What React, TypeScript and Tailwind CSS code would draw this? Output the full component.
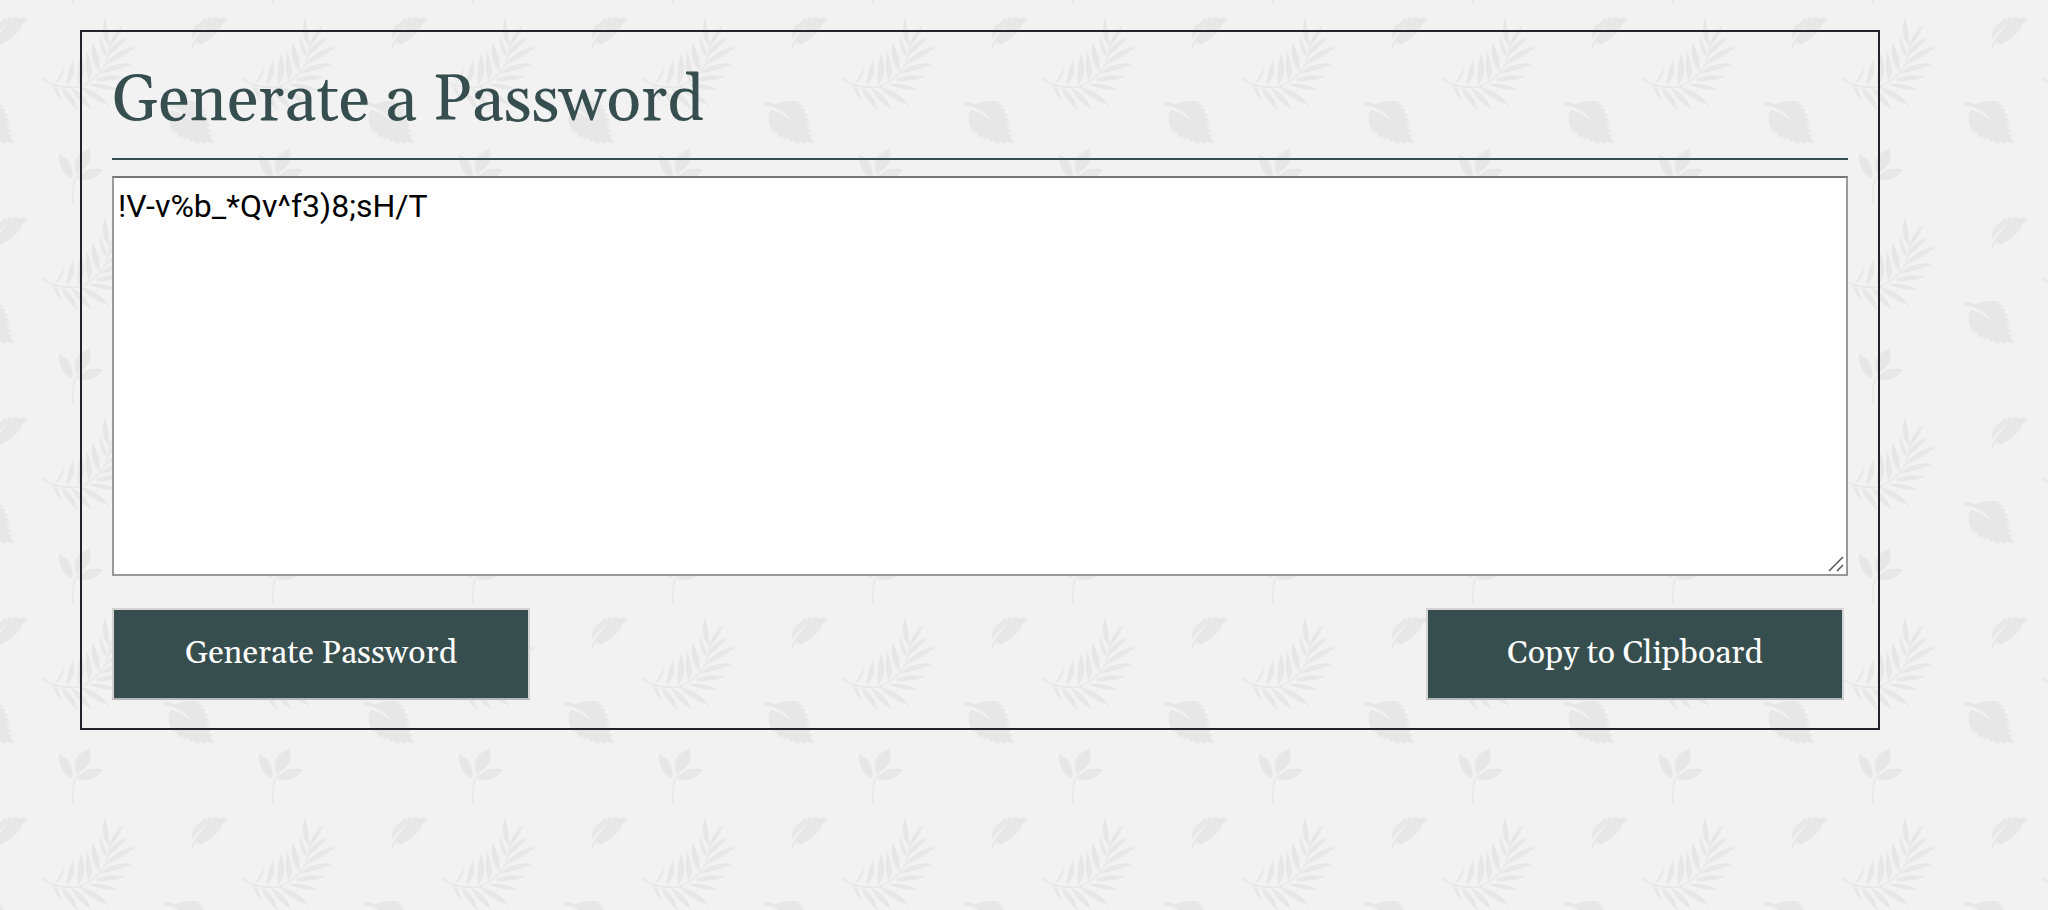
import { useState } from "react";

type Point = [number, number];

// Frond leaflets: base, tip, sideways bend, half width.
const leaflets: [Point, Point, number, number][] = [
  [[163, 374], [193, 324], 4, 9],
  [[197, 378], [220, 297], 7, 16],
  [[234, 378], [242, 280], 7, 19],
  [[267, 366], [260, 273], 4, 18],
  [[302, 335], [279, 248], -7, 20],
  [[323, 294], [299, 231], -4, 12],
  [[330, 266], [314, 170], -7, 16],
  [[326, 266], [372, 191], -3, 13],
  [[322, 290], [383, 233], -7, 15],
  [[316, 316], [411, 261], -9, 17],
  [[301, 340], [398, 311], -6, 17],
  [[284, 361], [375, 351], -3, 15],
  [[264, 373], [358, 391], -2, 14],
  [[236, 380], [330, 438], -3, 18],
  [[213, 384], [275, 451], -3, 17],
  [[183, 382], [234, 451], -3, 17],
  [[156, 376], [181, 424], -6, 12],
];

function leafletPath([[x1, y1], [x2, y2], bend, half]: [Point, Point, number, number]) {
  const dx = x2 - x1;
  const dy = y2 - y1;
  const length = Math.hypot(dx, dy);
  const nx = dy / length;
  const ny = -dx / length;
  const mx = x1 + dx * 0.45;
  const my = y1 + dy * 0.45;
  const a = -bend * 1.4 + half;
  const b = -bend * 1.4 - half;
  return `M${x1} ${y1}Q${mx + nx * a} ${my + ny * a} ${x2} ${y2}Q${mx + nx * b} ${my + ny * b} ${x1} ${y1}Z`;
}

const frond = leaflets.map(leafletPath).join("");

function Leaves() {
  return (
    <g fill="#e7e7e7" stroke="none">
      <path d={frond} />
      <path
        d="M124 354Q140 362 157 374Q200 386 240 380Q280 364 305 332Q326 300 329 258"
        fill="none"
        stroke="#e8e8e8"
        strokeWidth="5"
      />
      <path d="M685 176L671 172L655 177L648 168L638 177L629 170L621 181L611 176L606 184Q582 195 577 214Q573 228 576 239Q594 212 622 191Q600 216 583 242Q572 256 573 272L578 270Q580 256 589 247Q602 255 613 251L617 242L628 244L630 235L641 235L641 226L653 223L648 215L660 213L656 206L669 202L662 198Q670 188 685 176Z" />
      <path d="M490 426L505 426L528 433Q552 419 582 423L602 426L592 433L611 438L602 445L617 449L609 460L623 464L615 474L629 479L618 487L631 494L621 503L633 511L626 519L638 527L632 534L643 551L626 545L610 551L604 543L590 552L583 541L571 547L567 536L552 541L549 529L536 532L532 520L520 516Q503 492 506 468Q508 452 516 450Q552 461 585 492Q556 457 520 442L494 436Z" />
      <path d="M175 583Q198 592 209 609Q220 630 217 657Q197 650 186 627Q176 605 175 583ZM269 565Q274 588 269 606Q259 627 229 642Q222 622 227 598Q240 577 269 565ZM310 629Q293 650 270 658Q249 662 231 656Q244 638 267 628Q288 622 310 629Z" />
      <path
        d="M240 646Q232 651 224 659Q216 690 218 731"
        fill="none"
        stroke="#e9e9e9"
        strokeWidth="6"
      />
    </g>
  );
}

function LeafBackground() {
  return (
    <svg className="pointer-events-none absolute inset-0 h-full w-full" aria-hidden="true">
      <defs>
        <pattern id="leaves" width="200" height="200" patternUnits="userSpaceOnUse">
          <g transform="scale(0.33333) translate(0 -120)">
            <Leaves />
            <g transform="translate(-600 0)">
              <Leaves />
            </g>
            <g transform="translate(0 -600)">
              <Leaves />
            </g>
          </g>
        </pattern>
      </defs>
      <rect width="100%" height="100%" fill="url(#leaves)" />
    </svg>
  );
}

const characters =
  "ABCDEFGHIJKLMNOPQRSTUVWXYZabcdefghijklmnopqrstuvwxyz0123456789!%^*()_-;/";

function createPassword(length: number) {
  const values = crypto.getRandomValues(new Uint32Array(length));
  return Array.from(values, (value) => characters[value % characters.length]).join("");
}

const buttonClass =
  "h-[92px] w-[418px] cursor-pointer border-2 border-[#d3d3d3] border-b-[#b8b8b8] bg-[#374e4f] font-[Georgia,Gelasio,'Liberation_Serif',serif] text-[32px] leading-none text-white";

export default function App() {
  const [password, setPassword] = useState("!V-v%b_*Qv^f3)8;sH/T");

  return (
    <div className="relative min-h-screen bg-[#f2f2f2] pt-[30px]">
      <LeafBackground />
      <main className="relative mr-[168px] ml-20 border-2 border-[#212529] px-[30px] pb-7">
        <h1 className="border-b-2 border-[#374e4f] pt-[34px] pb-5 font-[Georgia,Gelasio,'Liberation_Serif',serif] text-[64px] leading-[72px] text-[#374e4f]">
          <label htmlFor="password">Generate a Password</label>
        </h1>
        <div className="relative mt-4">
          <textarea
            id="password"
            value={password}
            onChange={(event) => setPassword(event.target.value)}
            spellCheck={false}
            className="block h-[400px] w-full resize-none border-2 border-[#999999] border-t-[#767676] bg-white px-1 py-1.5 font-['Roboto',sans-serif] text-[32px] leading-[44px] text-black outline-none"
          />
          <svg
            className="pointer-events-none absolute right-1 bottom-1 h-4 w-4"
            viewBox="0 0 16 16"
            fill="none"
            stroke="#555"
            strokeWidth="1.5"
            aria-hidden="true"
          >
            <path d="M1 15L15 1M9 15L15 9" />
          </svg>
        </div>
        <div className="mt-8 flex flex-wrap justify-between gap-4 pr-1">
          <button type="button" className={buttonClass} onClick={() => setPassword(createPassword(20))}>
            Generate Password
          </button>
          <button
            type="button"
            className={buttonClass}
            onClick={() => navigator.clipboard.writeText(password)}
          >
            Copy to Clipboard
          </button>
        </div>
      </main>
    </div>
  );
}
